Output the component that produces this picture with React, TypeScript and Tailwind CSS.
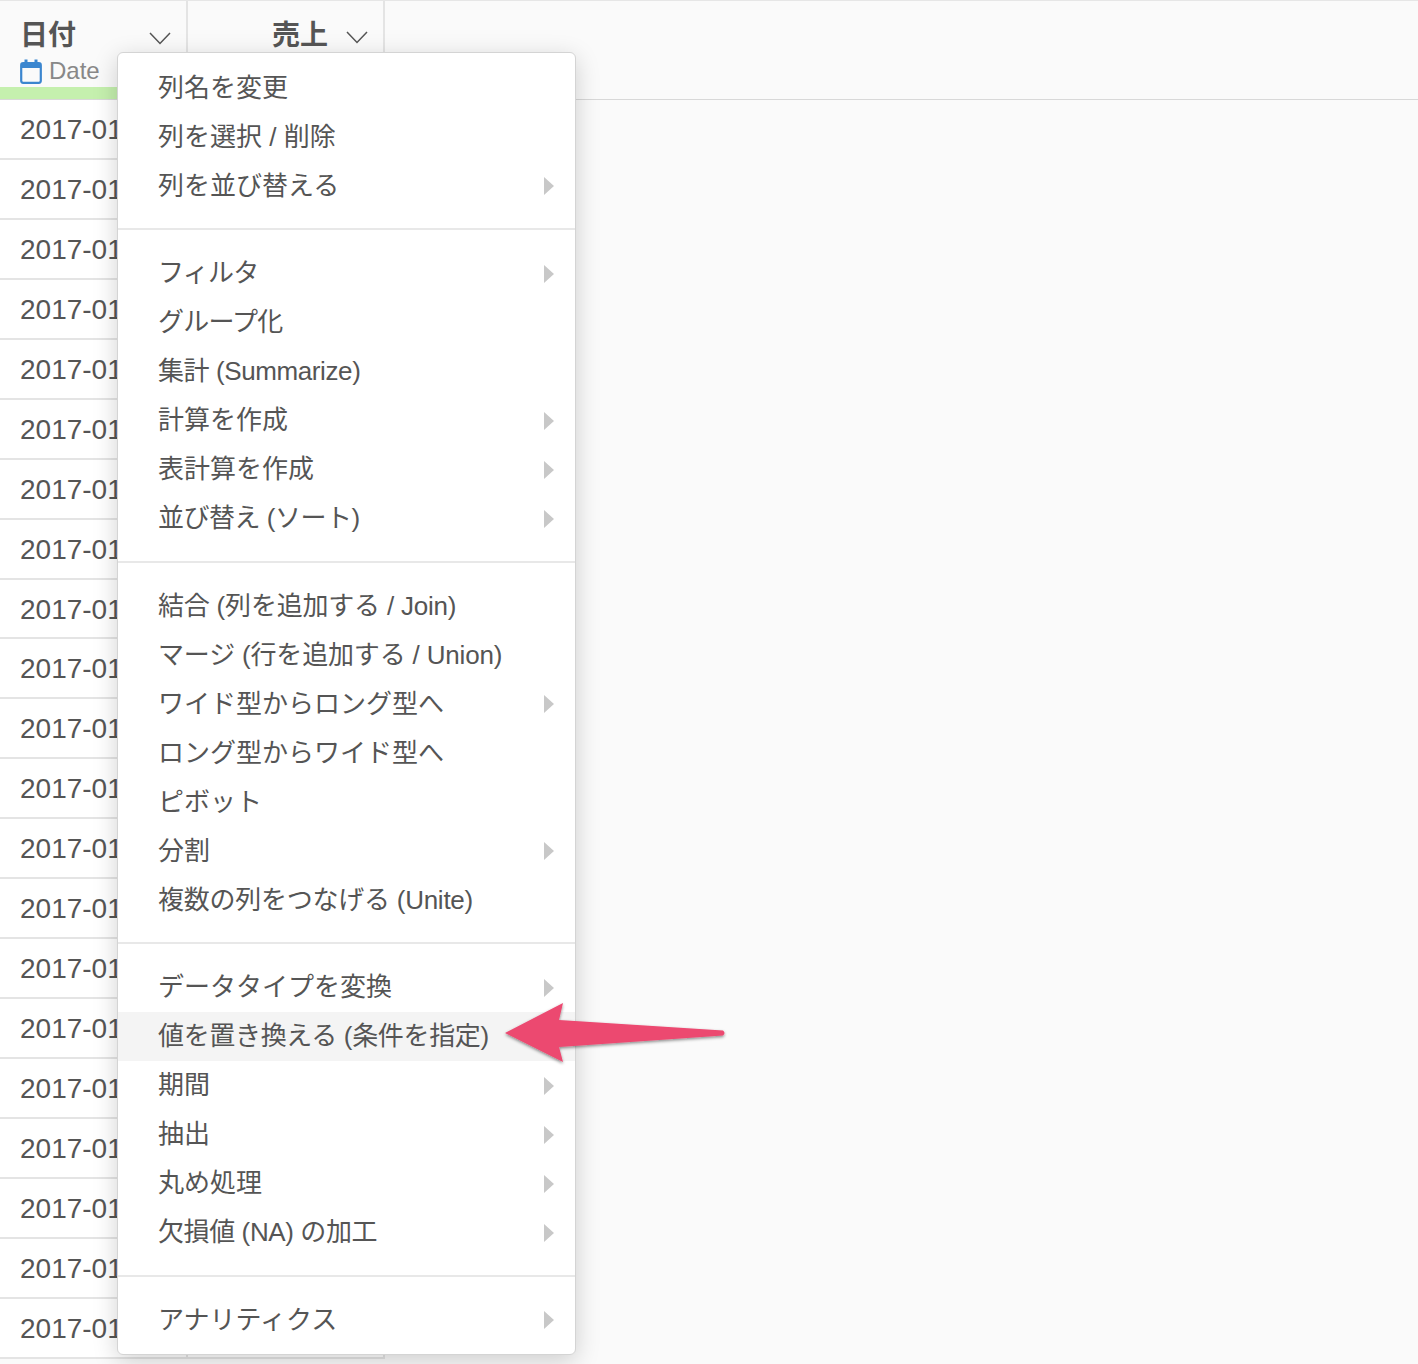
import React from 'react';

const FONT = "font-['Liberation_Sans','Noto_Sans_CJK_JP',sans-serif]";

interface MenuEntry {
  label: string;
  sub?: boolean;
  active?: boolean;
  tight?: string;
}

const menuGroups: MenuEntry[][] = [
  [{ label: '列名を変更' }, { label: '列を選択 / 削除' }, { label: '列を並び替える', sub: true }],
  [
    { label: 'フィルタ', sub: true, tight: 'tracking-[-0.75px]' },
    { label: 'グループ化', tight: 'tracking-[-0.8px]' },
    { label: '集計 (Summarize)', tight: 'tracking-[-0.4px]' },
    { label: '計算を作成', sub: true },
    { label: '表計算を作成', sub: true },
    { label: '並び替え (ソート)', sub: true, tight: 'tracking-[-0.5px]' },
  ],
  [
    { label: '結合 (列を追加する / Join)', tight: 'tracking-[-0.2px]' },
    { label: 'マージ (行を追加する / Union)', tight: 'tracking-[-0.17px]' },
    { label: 'ワイド型からロング型へ', sub: true },
    { label: 'ロング型からワイド型へ' },
    { label: 'ピボット' },
    { label: '分割', sub: true },
    { label: '複数の列をつなげる (Unite)', tight: 'tracking-[-0.25px]' },
  ],
  [
    { label: 'データタイプを変換', sub: true },
    { label: '値を置き換える (条件を指定)', active: true, tight: 'tracking-[-0.33px]' },
    { label: '期間', sub: true },
    { label: '抽出', sub: true },
    { label: '丸め処理', sub: true },
    { label: '欠損値 (NA) の加工', sub: true, tight: 'tracking-[-0.4px]' },
  ],
  [{ label: 'アナリティクス', sub: true }],
];

const rows = Array.from({ length: 21 }, (_, i) => i);

const MenuRow: React.FC<{ item: MenuEntry }> = ({ item }) => (
  <div className={`flex h-[49.1px] items-center justify-between pl-[40px] pr-[21px] text-[26px] text-[#555] ${item.active ? 'bg-[#f4f4f4] text-[#444]' : ''}`}>
    <span className={`whitespace-nowrap pt-[1px] ${item.tight ?? ''}`}>{item.label}</span>
    {item.sub && <span className="mt-[1px] h-0 w-0 border-y-[9px] border-l-[10px] border-y-transparent border-l-[#c8c8c8]" />}
  </div>
);

const Chevron = () => (
  <svg width="22" height="13" viewBox="0 0 22 13" fill="none">
    <path d="M1 1 L11 11.5 L21 1" stroke="#555" strokeWidth="1.5" />
  </svg>
);

const CalendarIcon = () => (
  <svg width="22" height="25" viewBox="0 0 22 25" fill="none">
    <rect x="1.2" y="4.2" width="19.6" height="19.6" rx="2" stroke="#3b86cf" strokeWidth="2.2" />
    <rect x="1" y="4" width="20" height="5" fill="#3b86cf" />
    <rect x="4.5" y="0.5" width="3" height="5" fill="#3b86cf" />
    <rect x="14.5" y="0.5" width="3" height="5" fill="#3b86cf" />
  </svg>
);

const PinkArrow = () => (
  <svg className="absolute left-[495px] top-[995px]" width="240" height="78" viewBox="0 0 240 78" fill="none">
    <defs>
      <filter id="arrow-shadow" x="-10%" y="-20%" width="120%" height="150%">
        <feDropShadow dx="0" dy="1.5" stdDeviation="1.5" floodColor="#000" floodOpacity="0.45" />
      </filter>
    </defs>
    <path
      d="M10 38 L68 8 L64 25 L228 35.5 Q231 38 228 40.5 L64 52 L68 67 Z"
      fill="#ec4870"
      filter="url(#arrow-shadow)"
    />
  </svg>
);

export default function App() {
  return (
    <div className={`relative h-[1364px] w-[1418px] overflow-hidden bg-[#fafafa] ${FONT}`}>
      <div className="flex h-[100px] border-y border-b-[#d8d8d8] border-t-[#e6e6e6]">
        <div className="relative flex w-[188px] flex-col border-r-2 border-[#e4e4e4] pl-[20px]">
          <div className="mt-[16px] flex items-center justify-between pr-[15px]">
            <span className="text-[28px] font-bold leading-[38px] text-[#555]">日付</span>
            <div className="mt-[4px]"><Chevron /></div>
          </div>
          <div className="mt-[1px] flex items-center gap-[7px]">
            <CalendarIcon />
            <span className="text-[24px] leading-[30px] text-[#888]">Date</span>
          </div>
          <div className="absolute bottom-0 left-0 right-0 h-[12px] bg-[#c5f0ae]" />
        </div>
        <div className="flex w-[197px] items-start justify-end border-r-2 border-[#e4e4e4] pr-[15px] pt-[16px]">
          <span className="mr-[18px] text-[28px] font-bold leading-[38px] text-[#555]">売上</span>
          <div className="mt-[14px]"><Chevron /></div>
        </div>
      </div>

      <div className="w-[385px]">
        {rows.map((r) => (
          <div key={r} className="flex h-[59.95px] border-b-2 border-[#e4e4e4] bg-white">
            <div className="w-[188px] border-r-2 border-[#e4e4e4] pl-[20px] pt-[11px] text-[28px] leading-[38px] text-[#555]">2017-01</div>
            <div className="flex-1 border-r-2 border-[#e4e4e4]" />
          </div>
        ))}
      </div>

      <div className="absolute left-[117px] top-[52px] flex h-[1303px] w-[459px] flex-col rounded-[6px] border border-[#d4d4d4] bg-white py-[10px] shadow-[0_6px_24px_rgba(0,0,0,0.18)]">
        {menuGroups.map((group, i) => (
          <React.Fragment key={i}>
            {i > 0 && <div className="mb-[18.5px] mt-[18px] h-[2px] shrink-0 bg-[#e8e8e8]" />}
            {group.map((item) => (
              <MenuRow key={item.label} item={item} />
            ))}
          </React.Fragment>
        ))}
      </div>

      <PinkArrow />
    </div>
  );
}
